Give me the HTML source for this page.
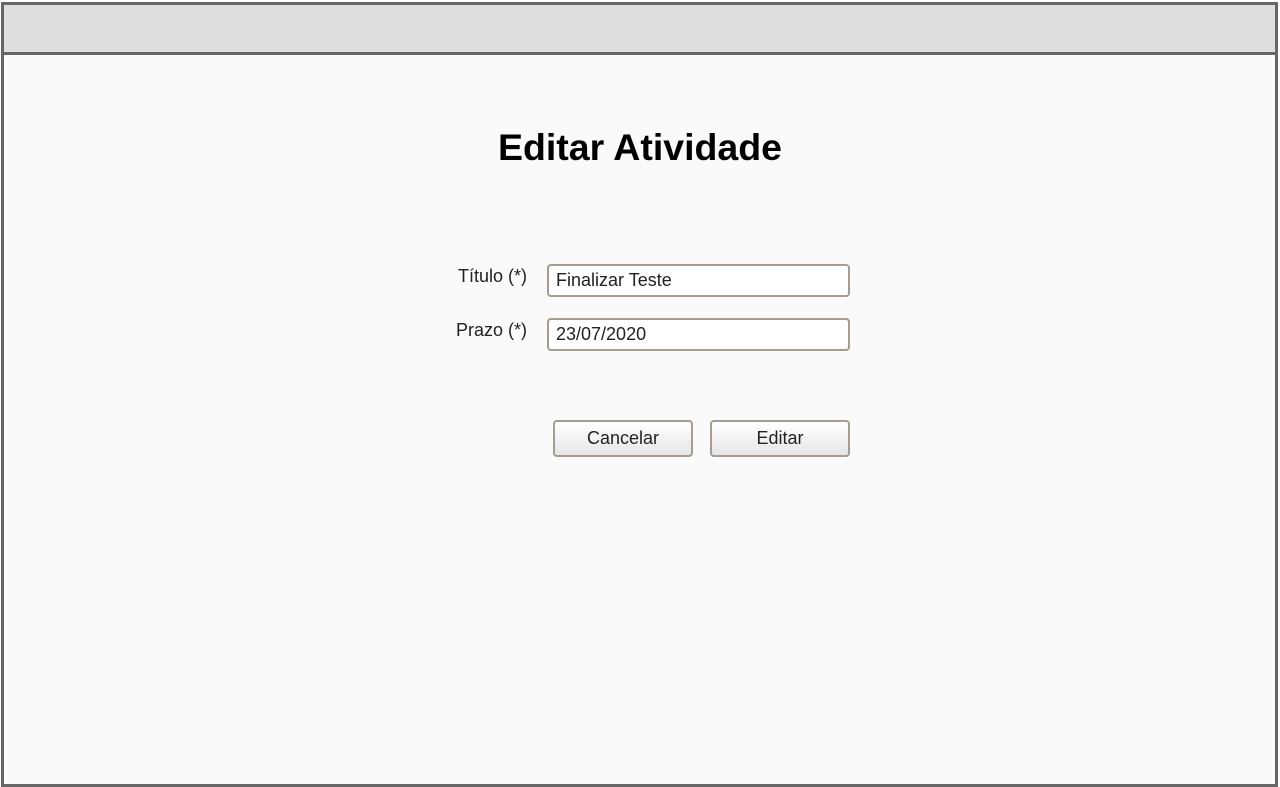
<!DOCTYPE html>
<html><head><style>
body{margin:0;width:1280px;height:787px;background:#fff;position:relative;overflow:hidden;font-family:"Liberation Sans",sans-serif;}
.frame{position:absolute;left:1px;top:2px;width:1271px;height:779px;border:3px solid #666;background:#fafafa;}
.hdr{position:absolute;left:0;top:0;width:1271px;height:47px;background:#dedede;border-bottom:3px solid #666;}
h1{position:absolute;left:0;top:125px;width:1280px;margin:0;text-align:center;font-size:37.5px;font-weight:bold;color:#000;line-height:44px;}
.lbl{position:absolute;right:753px;font-size:18px;color:#222;}
.in{position:absolute;left:547px;width:299px;height:29px;border:2px solid #a59d92;border-radius:4px;background:#fff;font-size:18px;color:#222;line-height:29px;text-indent:7px;}
.btn{position:absolute;top:420px;width:136px;height:33px;border:2px solid #a59d92;border-radius:4px;background:linear-gradient(#fff,#e6e6e6);font-size:18px;color:#222;text-align:center;line-height:33px;}
</style></head><body>
<div class="frame"><div class="hdr"></div></div>
<h1>Editar Atividade</h1>
<div class="lbl" style="top:266px">Título (*)</div>
<div class="lbl" style="top:320px">Prazo (*)</div>
<div class="in" style="top:264px">Finalizar Teste</div>
<div class="in" style="top:318px">23/07/2020</div>
<div class="btn" style="left:553px">Cancelar</div>
<div class="btn" style="left:710px">Editar</div>
</body></html>
